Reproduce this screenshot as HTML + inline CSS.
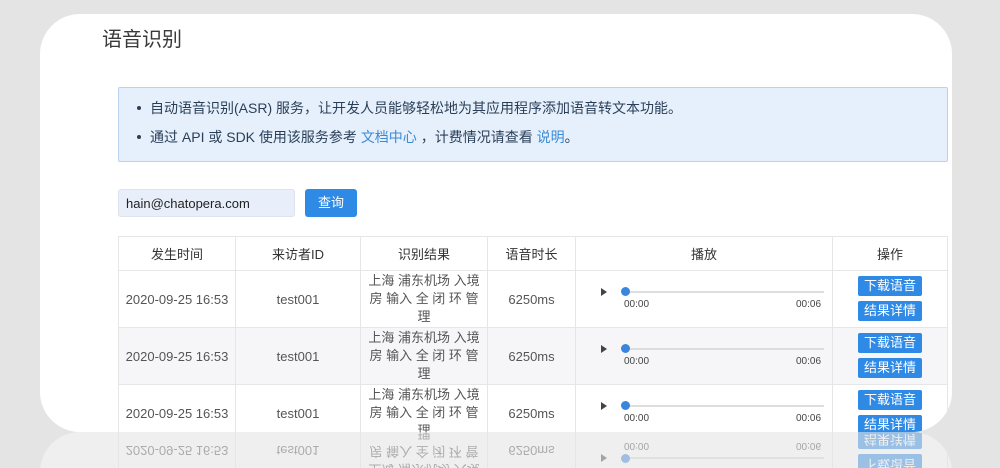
<!DOCTYPE html>
<html><head><meta charset="utf-8"><style>
*{margin:0;padding:0;box-sizing:border-box}
html,body{width:1000px;height:468px;overflow:hidden}
body{background:#e5e4e5;position:relative;font-family:"Liberation Sans","Noto Sans CJK SC",sans-serif;color:#333}
.card{position:absolute;left:40px;top:14px;width:912px;height:418px;background:#fff;border-radius:40px;overflow:hidden}
.in{position:absolute;left:-40px;top:-14px;width:1000px;height:468px}
.title{position:absolute;left:102px;top:23px;font-size:20px;color:#3a3a3a}
.info{position:absolute;left:118px;top:87px;width:830px;height:75px;background:#e6f0fc;border:1px solid #b8d2f0;border-radius:2px;font-size:14px;color:#2a3f57}
.info div{position:absolute;left:31px}
.info div:before{content:"";position:absolute;left:-13px;top:8px;width:4px;height:4px;border-radius:50%;background:#2a3f57}
.info a{color:#3a8ad6;text-decoration:none}
.inp{position:absolute;left:118px;top:189px;width:177px;height:28px;background:#e8effa;border:1px solid #dde4ee;border-radius:3px;font-size:13px;padding:6px 0 0 7px;color:#222}
.btn{position:absolute;left:305px;top:189px;width:52px;height:28px;background:#2f8ae6;border-radius:3px;color:#fff;font-size:13px;text-align:center;line-height:28px}
table{position:absolute;left:118px;top:236px;border-collapse:collapse;table-layout:fixed;font-size:13px;color:#555}
td,th{border:1px solid #e6e6e6;text-align:center;vertical-align:middle;padding:0}
th{height:34px;font-weight:normal;color:#333}
td{height:57px}
tr.g td{background:#f6f6f8}
.res{line-height:18px;font-size:13px}
.pl{position:relative;height:54px}
.tri{position:absolute;left:25px;top:16px;width:0;height:0;border-left:6px solid #444;border-top:4px solid transparent;border-bottom:4px solid transparent}
.bar{position:absolute;left:48px;top:19px;width:200px;height:2px;background:#ddd}
.dot{position:absolute;left:45px;top:15px;width:9px;height:9px;border-radius:50%;background:#3a86dc}
.t0{position:absolute;left:48px;top:27px;font-size:10px;color:#444}
.t1{position:absolute;left:220px;top:27px;font-size:10px;color:#444}
.b{display:block;margin:3px auto 5px;width:64px;height:20px;background:#2f8ae6;color:#fff;border-radius:2px;font-size:13px;line-height:20px}
.refl{position:absolute;left:0;top:432px;width:1000px;height:36px;overflow:hidden}
.refl .flip{position:absolute;left:0;top:-432px;width:1000px;height:468px;transform-origin:0 432px;transform:scaleY(-1)}
.ov{position:absolute;left:0;top:0;width:1000px;height:36px;background:rgba(229,228,229,0.6)}
</style></head><body>
<div class="card"><div class="in">
<div class="title">语音识别</div>
<div class="info">
<div style="top:10px">自动语音识别(ASR) 服务，让开发人员能够轻松地为其应用程序添加语音转文本功能。</div>
<div style="top:39px">通过 API 或 SDK 使用该服务参考 <a>文档中心</a> ，计费情况请查看 <a>说明</a>。</div>
</div>
<div class="inp">hain@chatopera.com</div>
<div class="btn">查询</div>
<table>
<colgroup><col style="width:117px"><col style="width:125px"><col style="width:127px"><col style="width:88px"><col style="width:257px"><col style="width:115px"></colgroup>
<tr><th>发生时间</th><th>来访者ID</th><th>识别结果</th><th>语音时长</th><th>播放</th><th>操作</th></tr>
<tr><td>2020-09-25 16:53</td><td>test001</td><td class="res">上海 浦东机场 入境<br>房 输入 全 闭 环 管<br>理</td><td>6250ms</td><td><div class="pl"><i class="tri"></i><i class="bar"></i><i class="dot"></i><span class="t0">00:00</span><span class="t1">00:06</span></div></td><td><span class="b">下载语音</span><span class="b">结果详情</span></td></tr>
<tr class="g"><td>2020-09-25 16:53</td><td>test001</td><td class="res">上海 浦东机场 入境<br>房 输入 全 闭 环 管<br>理</td><td>6250ms</td><td><div class="pl"><i class="tri"></i><i class="bar"></i><i class="dot"></i><span class="t0">00:00</span><span class="t1">00:06</span></div></td><td><span class="b">下载语音</span><span class="b">结果详情</span></td></tr>
<tr><td>2020-09-25 16:53</td><td>test001</td><td class="res">上海 浦东机场 入境<br>房 输入 全 闭 环 管<br>理</td><td>6250ms</td><td><div class="pl"><i class="tri"></i><i class="bar"></i><i class="dot"></i><span class="t0">00:00</span><span class="t1">00:06</span></div></td><td><span class="b">下载语音</span><span class="b">结果详情</span></td></tr>
</table>
</div></div>
<div class="refl"><div class="flip">
<div class="card"><div class="in">
<table>
<colgroup><col style="width:117px"><col style="width:125px"><col style="width:127px"><col style="width:88px"><col style="width:257px"><col style="width:115px"></colgroup>
<tr><th>发生时间</th><th>来访者ID</th><th>识别结果</th><th>语音时长</th><th>播放</th><th>操作</th></tr>
<tr><td>2020-09-25 16:53</td><td>test001</td><td class="res">上海 浦东机场 入境<br>房 输入 全 闭 环 管<br>理</td><td>6250ms</td><td></td><td></td></tr>
<tr class="g"><td>2020-09-25 16:53</td><td>test001</td><td class="res">上海 浦东机场 入境<br>房 输入 全 闭 环 管<br>理</td><td>6250ms</td><td></td><td></td></tr>
<tr><td>2020-09-25 16:53</td><td>test001</td><td class="res">上海 浦东机场 入境<br>房 输入 全 闭 环 管<br>理</td><td>6250ms</td><td><div class="pl"><i class="tri"></i><i class="bar"></i><i class="dot"></i><span class="t0">00:00</span><span class="t1">00:06</span></div></td><td><span class="b">下载语音</span><span class="b">结果详情</span></td></tr>
</table>
</div></div>
</div><div class="ov"></div></div>
</body></html>
